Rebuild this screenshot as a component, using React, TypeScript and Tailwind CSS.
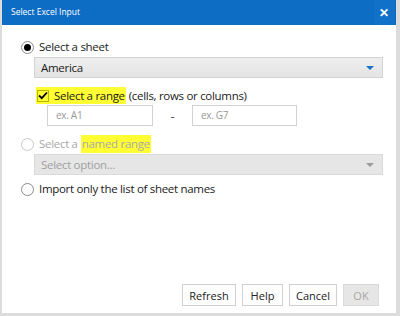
import React from 'react';

// Radio bullet, drawn as a ring with an optional dot
function Radio({ checked = false, disabled = false }: { checked?: boolean; disabled?: boolean }) {
  return (
    <span
      className={`flex h-[13px] w-[13px] shrink-0 items-center justify-center rounded-full border bg-white ${
        disabled ? 'border-[#c8c8c8]' : 'border-[#8a8a8a]'
      }`}
    >
      {checked && <span className="h-[7px] w-[7px] rounded-full bg-black" />}
    </span>
  );
}

function Caret({ color }: { color: string }) {
  return (
    <svg width="8" height="4" viewBox="0 0 8 4" className="shrink-0">
      <path d="M0 0 H8 L4 4 Z" fill={color} />
    </svg>
  );
}

function Btn({ label, width, disabled = false }: { label: string; width: string; disabled?: boolean }) {
  return (
    <button
      className={`h-[22px] border text-[11px] leading-none ${width} ${
        disabled
          ? 'border-[#dadada] bg-[#e6e6e6] text-[#a8a8a8]'
          : 'border-[#d0d0d0] bg-white text-[#222]'
      }`}
    >
      {label}
    </button>
  );
}

export default function App() {
  return (
    <div
      className="flex h-[316px] w-[400px] flex-col border-b-[3px] border-l-2 border-r-4 border-[#dcdcdc] bg-white text-[#1a1a1a]"
      style={{ fontFamily: '"Open Sans", "Noto Sans", sans-serif' }}
    >
      {/* Title bar */}
      <div className="flex h-[25px] shrink-0 items-center justify-between bg-[#0d6cc4] text-white">
        <span className="pl-[9px] text-[8.5px]">Select Excel Input</span>
        <span className="mr-[2px] flex h-full w-[20px] items-center justify-center bg-[#1170c8] text-[12px] font-bold leading-none">
          ✕
        </span>
      </div>

      {/* Body */}
      <div className="flex flex-1 flex-col pl-[19px] text-[11.5px] tracking-[-0.3px]">
        <div className="mt-[15px] flex h-[14px] items-center gap-[5px]">
          <Radio checked />
          <span>Select a sheet</span>
        </div>

        <div className="ml-[13px] mt-[3px] flex h-[21px] w-[349px] items-center justify-between border border-[#d2d2d2] bg-gradient-to-b from-[#efefef] to-[#e4e4e4] pl-[6px] pr-[8px]">
          <span>America</span>
          <Caret color="#1a73c9" />
        </div>

        <div className="ml-[15px] mt-[9px] flex h-[17px] items-center">
          <span className="flex h-full items-center gap-[5px] bg-[#ffff33] pl-[1px] pr-[1px]">
            <span className="flex h-[12px] w-[12px] items-center justify-center border border-[#b8b800]">
              <svg width="10" height="9" viewBox="0 0 10 9">
                <path d="M1 4.5 L3.8 7.2 L9 1.5" fill="none" stroke="#000" strokeWidth="1.8" />
              </svg>
            </span>
            <span>Select a range</span>
          </span>
          <span className="ml-[3px]">(cells, rows or columns)</span>
        </div>

        <div className="ml-[26px] mt-[1px] flex items-center">
          <div className="flex h-[21px] w-[106px] items-center border border-[#d2d2d2] pl-[8px] text-[10px] text-[#9a9a9a]">
            ex. A1
          </div>
          <span className="w-[39px] text-center">-</span>
          <div className="flex h-[21px] w-[105px] items-center border border-[#d2d2d2] pl-[8px] text-[10px] text-[#9a9a9a]">
            ex. G7
          </div>
        </div>

        <div className="mt-[9px] flex h-[18px] items-center gap-[5px] text-[#a8a8a8]">
          <Radio disabled />
          <span className="flex h-full items-center">
            Select a <span className="ml-[3px] flex h-full items-center bg-[#ffff33] px-[1px]">named range</span>
          </span>
        </div>

        <div className="ml-[13px] mt-[1px] flex h-[21px] w-[349px] items-center justify-between border border-[#dadada] bg-[#e6e6e6] pl-[6px] pr-[8px] text-[#a0a0a0]">
          <span>Select option...</span>
          <Caret color="#9a9a9a" />
        </div>

        <div className="mt-[7px] flex h-[14px] items-center gap-[5px]">
          <Radio />
          <span>Import only the list of sheet names</span>
        </div>

        <div className="mb-[7px] mr-[17px] mt-auto flex justify-end gap-[6px] tracking-normal">
          <Btn label="Refresh" width="w-[54px]" />
          <Btn label="Help" width="w-[41px]" />
          <Btn label="Cancel" width="w-[48px]" />
          <Btn label="OK" width="w-[36px]" disabled />
        </div>
      </div>
    </div>
  );
}
